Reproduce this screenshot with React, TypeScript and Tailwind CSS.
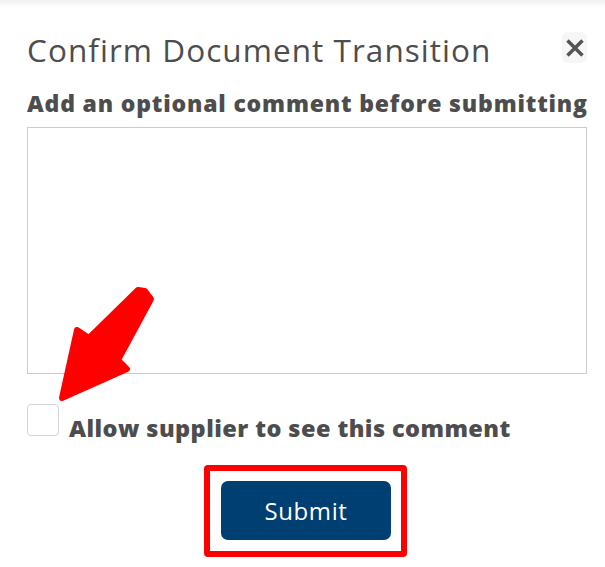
import { useState } from 'react';

export default function App() {
  const [checked, setChecked] = useState(false);

  return (
    <div className="relative w-[605px] h-[567px] bg-white overflow-hidden font-['Open_Sans',sans-serif] text-[#4a4a4a]">
      <div className="h-[7px] bg-gradient-to-b from-[#f0f0f0] to-white" />

      <div className="px-[27px] pt-[23px]">
        <div className="flex items-start justify-between">
          <h1 className="text-[31.5px] leading-[40px] tracking-[1.05px] font-medium text-[#4d4d4d] whitespace-nowrap">
            Confirm Document Transition
          </h1>
          <button className="mt-[2px] mr-[-9px] w-[25px] h-[31px] rounded-[6px] bg-[#f6f6f6] flex items-center justify-center text-[#555]">
            <svg width="20" height="20" viewBox="0 0 20 20" fill="none" stroke="currentColor" strokeWidth="3.5" strokeLinecap="butt">
              <path d="M2.5 2.5 L17.5 17.5 M17.5 2.5 L2.5 17.5" />
            </svg>
          </button>
        </div>

        <p className="mt-[18px] text-[23px] leading-[30px] tracking-[0.82px] font-extrabold text-[#4d4d4d] whitespace-nowrap">
          Add an optional comment before submitting
        </p>

        <textarea className="mt-[9px] block w-[560px] h-[247px] border border-[#cccccc] resize-none outline-none" />

        <label className="mt-[30px] flex items-start gap-[10px] cursor-pointer">
          <input
            type="checkbox"
            checked={checked}
            onChange={() => setChecked(!checked)}
            className="appearance-none w-[32px] h-[32px] rounded-[4px] border border-[#d4d4d4] bg-white checked:bg-[#003f72]"
          />
          <span className="mt-[10px] text-[23.5px] leading-[28px] tracking-[0.43px] font-extrabold text-[#4d4d4d] whitespace-nowrap">
            Allow supplier to see this comment
          </span>
        </label>

        <div className="mt-[23px] flex justify-center">
          <div className="ml-[6px] pt-[10px] pb-[11px] pl-[11px] pr-[10px] border-[6px] border-[#ff0000] rounded-[4px]">
            <button className="w-[170px] h-[59px] rounded-[7px] bg-[#003f72] text-white text-[24px] tracking-[0.6px]">
              Submit
            </button>
          </div>
        </div>
      </div>

      <svg className="absolute left-0 top-0 pointer-events-none" width="605" height="567">
        <polygon
          points="145,291 151,299 118,360 127,369 62,398 77,330 89,338 138,290"
          fill="#ff0000"
          stroke="#ff0000"
          strokeWidth="6"
          strokeLinejoin="round"
        />
      </svg>
    </div>
  );
}
